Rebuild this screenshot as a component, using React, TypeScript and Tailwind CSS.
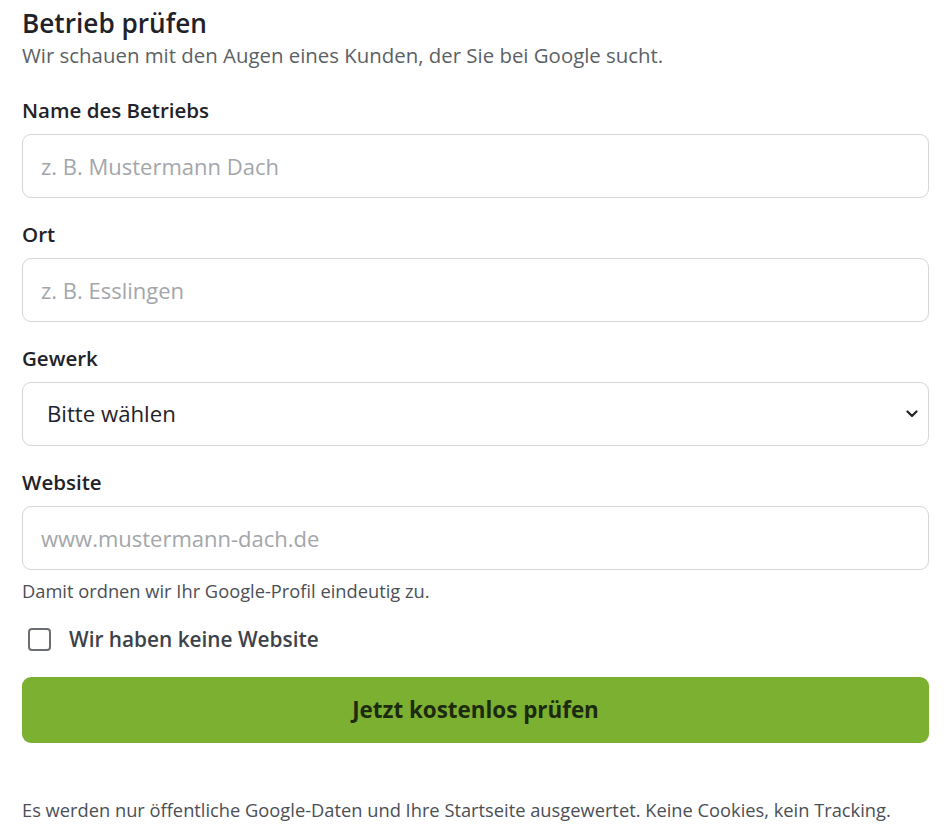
import React, { useState } from 'react';

const font = { fontFamily: '"Open Sans", "Noto Sans", sans-serif' };

function Field({ label, placeholder }: { label: string; placeholder: string }) {
  return (
    <div>
      <label className="block text-[20.5px] font-semibold text-[#1f2329] leading-[28px]">{label}</label>
      <input
        type="text"
        placeholder={placeholder}
        className="mt-[10px] block h-[64px] w-full rounded-[9px] border border-[#d4d6da] bg-white px-[18px] text-[22px] text-[#1f2329] placeholder:text-[#a3a6ab] outline-none"
      />
    </div>
  );
}

export default function App() {
  const [noWebsite, setNoWebsite] = useState(false);

  return (
    <div className="min-h-screen bg-white" style={font}>
      <form className="pl-[22px] pr-[21px] pt-[4px]" onSubmit={e => e.preventDefault()}>
        <h2 className="text-[26.2px] font-semibold leading-[38px] text-[#1f2329]">Betrieb prüfen</h2>
        <p className="text-[20.4px] leading-[26px] text-[#5b5f66]">
          Wir schauen mit den Augen eines Kunden, der Sie bei Google sucht.
        </p>

        <div className="mt-[28px] space-y-[22px]">
          <Field label="Name des Betriebs" placeholder="z. B. Mustermann Dach" />
          <Field label="Ort" placeholder="z. B. Esslingen" />

          <div>
            <label className="block text-[20.5px] font-semibold text-[#1f2329] leading-[28px]">Gewerk</label>
            <div className="relative mt-[10px]">
              <select className="block h-[64px] w-full appearance-none rounded-[9px] border border-[#d4d6da] bg-white pl-[24px] text-[22.2px] text-[#1f2329] outline-none">
                <option>Bitte wählen</option>
                <option>Dachdecker</option>
                <option>Elektriker</option>
                <option>Sanitär / Heizung</option>
              </select>
              <svg
                className="pointer-events-none absolute right-[11px] top-1/2 -translate-y-1/2"
                width="12"
                height="8"
                viewBox="0 0 12 8"
                fill="none"
              >
                <path d="M1.5 1.5 6 6l4.5-4.5" stroke="#222" strokeWidth="2.2" strokeLinecap="round" strokeLinejoin="round" />
              </svg>
            </div>
          </div>

          <div>
            <Field label="Website" placeholder="www.mustermann-dach.de" />
            <p className="mt-[8px] text-[18.3px] leading-[26px] text-[#4b4f56]">Damit ordnen wir Ihr Google-Profil eindeutig zu.</p>
            <label className="mt-[20px] flex cursor-pointer items-center gap-[18px] pl-[6px]">
              <input
                type="checkbox"
                checked={noWebsite}
                onChange={e => setNoWebsite(e.target.checked)}
                className="h-[23px] w-[23px] appearance-none rounded-[4px] border-2 border-[#6b6e73] bg-white checked:bg-[#7cb030]"
              />
              <span className="text-[20.8px] font-semibold text-[#3d4249]">Wir haben keine Website</span>
            </label>
          </div>
        </div>

        <button
          type="submit"
          className="mt-[22px] flex h-[66px] w-full items-center justify-center rounded-[9px] bg-[#7cb030] text-[22.4px] font-bold text-[#1c2a0f]"
        >
          Jetzt kostenlos prüfen
        </button>

        <p className="mt-[54px] text-[18.3px] leading-[26px] text-[#4b4f56]">
          Es werden nur öffentliche Google-Daten und Ihre Startseite ausgewertet. Keine Cookies, kein Tracking.
        </p>
      </form>
    </div>
  );
}
